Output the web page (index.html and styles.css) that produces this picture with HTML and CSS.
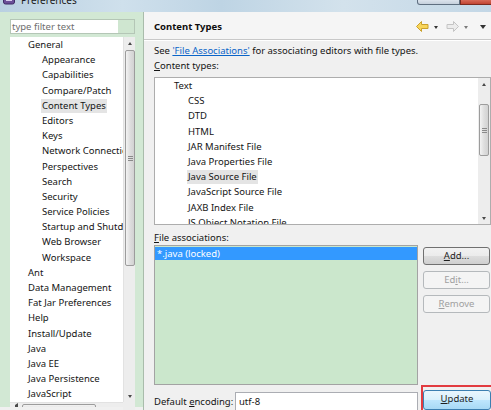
FILE: index.html
```html
<!DOCTYPE html>
<html>
<head>
<meta charset="utf-8">
<title>Preferences</title>
<link rel="stylesheet" href="styles.css">
</head>
<body>
<div class="titlebar">
  <svg class="appicon" width="12" height="12" viewBox="0 0 12 12"><rect x="0.5" y="-4" width="11" height="8" rx="2" fill="#6b4f98" stroke="#3f2a66"/><rect x="3" y="-2" width="6" height="3" fill="#d9cdee"/></svg>
  <span class="title">Preferences</span>
  <div class="winbtns"><span class="wb grey"></span><span class="wb red"></span></div>
</div>
<div class="main">
  <div class="left">
    <div class="filter"><span class="ph">type filter text</span><span class="clear"></span></div>
    <div class="tree">
      <div class="treelist">
        <div class="ti l0">General</div>
        <div class="ti l1">Appearance</div>
        <div class="ti l1">Capabilities</div>
        <div class="ti l1">Compare/Patch</div>
        <div class="ti l1"><span class="hl">Content Types</span></div>
        <div class="ti l1">Editors</div>
        <div class="ti l1">Keys</div>
        <div class="ti l1">Network Connections</div>
        <div class="ti l1">Perspectives</div>
        <div class="ti l1">Search</div>
        <div class="ti l1">Security</div>
        <div class="ti l1">Service Policies</div>
        <div class="ti l1">Startup and Shutdown</div>
        <div class="ti l1">Web Browser</div>
        <div class="ti l1">Workspace</div>
        <div class="ti l0">Ant</div>
        <div class="ti l0">Data Management</div>
        <div class="ti l0">Fat Jar Preferences</div>
        <div class="ti l0">Help</div>
        <div class="ti l0">Install/Update</div>
        <div class="ti l0">Java</div>
        <div class="ti l0">Java EE</div>
        <div class="ti l0">Java Persistence</div>
        <div class="ti l0">JavaScript</div>
      </div>
      <div class="vs">
        <div class="arr"><span class="tri up"></span></div>
        <div class="thumb tree-thumb"><span class="grip"></span></div>
        <div class="spacer"></div>
        <div class="arr"><span class="tri down"></span></div>
      </div>
      <div class="hs">
        <div class="harr"><span class="tri left"></span></div>
        <div class="hthumb"><span class="vgrip"></span></div>
        <div class="spacer"></div>
        <div class="harr"><span class="tri right"></span></div>
      </div>
      <div class="corner"></div>
    </div>
  </div>
  <div class="right">
    <div class="header">
      <span class="htitle">Content Types</span>
      <div class="nav">
        <svg width="13" height="11" viewBox="0 0 13 11"><polygon points="0.5,5.5 5.5,0.5 5.5,3.5 12,3.5 12,7.5 5.5,7.5 5.5,10.5" fill="#f8d55a" stroke="#caa02c"/></svg>
        <span class="dd dark"></span>
        <svg class="fwd" width="13" height="11" viewBox="0 0 13 11"><polygon points="12.5,5.5 7.5,0.5 7.5,3.5 1,3.5 1,7.5 7.5,7.5 7.5,10.5" fill="#ececec" stroke="#c4c4c4"/></svg>
        <span class="dd grey"></span>
        <span class="dd dark big"></span>
      </div>
    </div>
    <div class="body">
      <p class="line">See <a class="link">'File Associations'</a> for associating editors with file types.</p>
      <p class="line"><u>C</u>ontent types:</p>
      <div class="ctlist">
        <div class="items">
          <div class="ci c0">Text</div>
          <div class="ci c1">CSS</div>
          <div class="ci c1">DTD</div>
          <div class="ci c1">HTML</div>
          <div class="ci c1">JAR Manifest File</div>
          <div class="ci c1">Java Properties File</div>
          <div class="ci c1"><span class="hl">Java Source File</span></div>
          <div class="ci c1">JavaScript Source File</div>
          <div class="ci c1">JAXB Index File</div>
          <div class="ci c1">JS Object Notation File</div>
        </div>
        <div class="vs ct-vs">
          <div class="arr"><span class="tri up"></span></div>
          <div class="thumb ct-thumb"><span class="grip"></span></div>
          <div class="spacer"></div>
          <div class="arr"><span class="tri down"></span></div>
        </div>
      </div>
      <p class="line fa"><u>F</u>ile associations:</p>
      <div class="assoc-row">
        <div class="assoc"><div class="asel">*.java (locked)</div></div>
        <div class="btns">
          <div class="btn"><u>A</u>dd...</div>
          <div class="btn disabled">Ed<u>i</u>t...</div>
          <div class="btn disabled"><u>R</u>emove</div>
        </div>
      </div>
      <div class="enc-row">
        <span class="enc-label">Default <u>e</u>ncoding:</span>
        <div class="input">utf-8</div>
        <div class="mark"><div class="btn upd"><u>U</u>pdate</div></div>
      </div>
    </div>
  </div>
</div>
</body>
</html>
```

FILE: styles.css
```css
* { box-sizing: border-box; }
html, body { margin: 0; padding: 0; width: 491px; height: 410px; overflow: hidden; }
body {
  font-family: "Noto Sans", "Liberation Sans", sans-serif;
  font-size: 9.5px;
  color: #141414;
  background: #d2e8d4;
}
p { margin: 0; }
u { text-decoration: underline; text-underline-offset: 1px; }

/* title bar */
.titlebar {
  height: 12px;
  display: flex;
  align-items: flex-start;
  overflow: hidden;
  background: linear-gradient(90deg, #b9d0e1 0%, #cfe0ec 25%, #bed4e4 45%, #d3e2ec 70%, #c3d7e6 100%);
}
.appicon { margin-left: 3px; flex: none; }
.title {
  margin-left: 6px;
  margin-top: -6px;
  font-size: 10px;
  line-height: 12px;
  color: #1b1b1b;
}
.winbtns { margin-left: auto; display: flex; height: 5px; }
.wb { display: block; height: 5px; border: 1px solid #5f6f80; border-top: none; }
.wb.grey { width: 43px; background: linear-gradient(#dbe3ec, #c5d0dc); border-radius: 0 0 0 3px; }
.wb.red { width: 31px; background: linear-gradient(#d76a58, #c14532); border-color: #7b2b20; border-right: none; }

/* main */
.main { display: flex; height: 398px; overflow: hidden; padding-left: 10px; }
.left { width: 125px; flex: none; padding-top: 7px; display: flex; flex-direction: column; gap: 3px; }
.filter { height: 15px; display: flex; border: 1px solid #b4c6b6; background: #fff; }
.ph { flex: 1; color: #6e6e6e; padding-left: 1px; line-height: 13px; white-space: nowrap; }
.clear { width: 16px; background: #cfe6d0; }

.tree {
  height: 377px;
  flex: none;
  background: #fff;
  display: grid;
  grid-template-columns: 113px 12px;
  grid-template-rows: 365px 12px;
}
.treelist { overflow: hidden; }
.ti { height: 15.2px; line-height: 15.2px; white-space: nowrap; }
.l0 { padding-left: 18px; }
.l1 { padding-left: 32px; }
.hl { display: inline-block; background: #e4e4e4; margin-left: -1px; padding: 0 1px; line-height: 14px; }

/* scrollbars */
.vs { display: flex; flex-direction: column; background: #ededed; border-left: 1px solid #e2e2e2; }
.arr { height: 12px; display: flex; align-items: center; justify-content: center; flex: none; }
.spacer { flex: 1; }
.tri { width: 0; height: 0; display: block; }
.tri.up { border-left: 2.5px solid transparent; border-right: 2.5px solid transparent; border-bottom: 3px solid #4a4a4a; }
.tri.down { border-left: 2.5px solid transparent; border-right: 2.5px solid transparent; border-top: 3px solid #4a4a4a; }
.tri.left { border-top: 2.5px solid transparent; border-bottom: 2.5px solid transparent; border-right: 3px solid #4a4a4a; }
.tri.right { border-top: 2.5px solid transparent; border-bottom: 2.5px solid transparent; border-left: 3px solid #4a4a4a; }
.thumb {
  margin: 1px 0 0 1px;
  width: 10px;
  border: 1px solid #9c9c9c;
  border-radius: 2px;
  background: linear-gradient(90deg, #f3f3f3, #dedede 50%, #d2d2d2);
  display: flex; align-items: center; justify-content: center;
  flex: none;
}
.tree-thumb { height: 216px; }
.grip { width: 5px; height: 5px; border-top: 1px solid #8a8a8a; border-bottom: 1px solid #8a8a8a; }
.grip::after { content: ""; display: block; height: 1px; margin-top: 1px; background: #8a8a8a; }
.hs { display: flex; background: #ededed; border-top: 1px solid #e2e2e2; }
.harr { width: 12px; display: flex; align-items: center; justify-content: center; flex: none; }
.hthumb {
  width: 74px; margin-top: 1px; height: 10px; flex: none;
  border: 1px solid #9c9c9c; border-radius: 2px;
  background: linear-gradient(#f3f3f3, #dedede 50%, #d2d2d2);
  display: flex; justify-content: center; padding-top: 2px;
}
.vgrip { width: 5px; height: 4px; border-left: 1px solid #8a8a8a; border-right: 1px solid #8a8a8a; }
.vgrip::after { content: ""; display: block; width: 1px; height: 4px; margin-left: 1px; background: #8a8a8a; }
.corner { background: #ededed; }

/* right panel */
.right {
  margin-left: 8px;
  width: 348px;
  flex: none;
  background: #f0f0f0;
  border-left: 1px solid #a9bcab;
}
.header {
  height: 28px;
  display: flex;
  align-items: center;
  padding: 2px 5px 0 10px;
  background: #f5f5f5;
  border-bottom: 1px solid #c8c8c8;
}
.htitle { font-weight: bold; color: #0e0e0e; }
.nav { margin-left: auto; display: flex; align-items: center; }
.nav svg { display: block; }
.dd { display: block; width: 0; height: 0; border-left: 2.5px solid transparent; border-right: 2.5px solid transparent; border-top: 3px solid #333; margin: 1px 7px 0 5px; }
.dd.grey { border-top-color: #7a7a7a; }
.dd.big { border-left-width: 3.5px; border-right-width: 3.5px; border-top-width: 4px; margin: 1px 0 0 5px; }
.fwd { margin-left: 1px; }

.body { padding: 2px 0 0 10px; border-top: 1px solid #fff; }
.line { height: 15px; line-height: 15px; white-space: nowrap; }
.line.fa { margin-top: 5px; }
.link { color: #0a64c8; text-decoration: underline; }

.ctlist {
  margin-top: 4px;
  width: 337px;
  height: 148px;
  border: 1px solid #adadad;
  background: #fff;
  display: grid;
  grid-template-columns: 1fr 12px;
  grid-template-rows: 146px;
}
.items { overflow: hidden; }
.ci { height: 15.2px; line-height: 15.2px; white-space: nowrap; }
.c0 { padding-left: 19px; }
.c1 { padding-left: 33px; }
.ct-vs { border-left: none; }
.ct-thumb { height: 52px; margin-top: 14px; }

.assoc-row { display: flex; height: 140px; }
.assoc {
  width: 264px;
  height: 140px;
  flex: none;
  border: 1px solid #a3a3a3;
  background: #cbe7cc;
  padding: 1px 0 0 0;
}
.asel { height: 13px; line-height: 13px; background: #3399ff; color: #fff; padding-left: 2px; }
.btns { margin-left: 5px; padding-top: 2px; display: flex; flex-direction: column; gap: 6px; flex: none; }
.btn {
  width: 67px;
  height: 18px;
  line-height: 16px;
  text-align: center;
  border: 1px solid #707070;
  border-radius: 3px;
  background: linear-gradient(#f2f2f2 0%, #ebebeb 50%, #dddddd 51%, #cfcfcf 100%);
  color: #1e1e1e;
}
.btn.disabled { border-color: #b5b9bc; background: #f4f4f4; color: #a0a0a0; }

.enc-row { display: flex; align-items: flex-start; }
.enc-label { width: 81px; flex: none; margin-top: 9px; line-height: 15px; white-space: nowrap; }
.input {
  margin-top: 7px;
  width: 183px;
  flex: none;
  height: 20px;
  border: 1px solid #abadb3;
  background: #fff;
  padding-left: 3px;
  line-height: 17px;
}
.mark { margin-left: 3px; width: 78px; height: 30px; flex: none; border: 2px solid #e23b40; padding: 3px 0 0 0; }
.btn.upd {
  width: 68px;
  height: 20px;
  border-color: #3c7fb1;
  background: linear-gradient(#eaf6fd 0%, #d9f0fc 50%, #bee6fd 51%, #a7d9f5 100%);
}
```
